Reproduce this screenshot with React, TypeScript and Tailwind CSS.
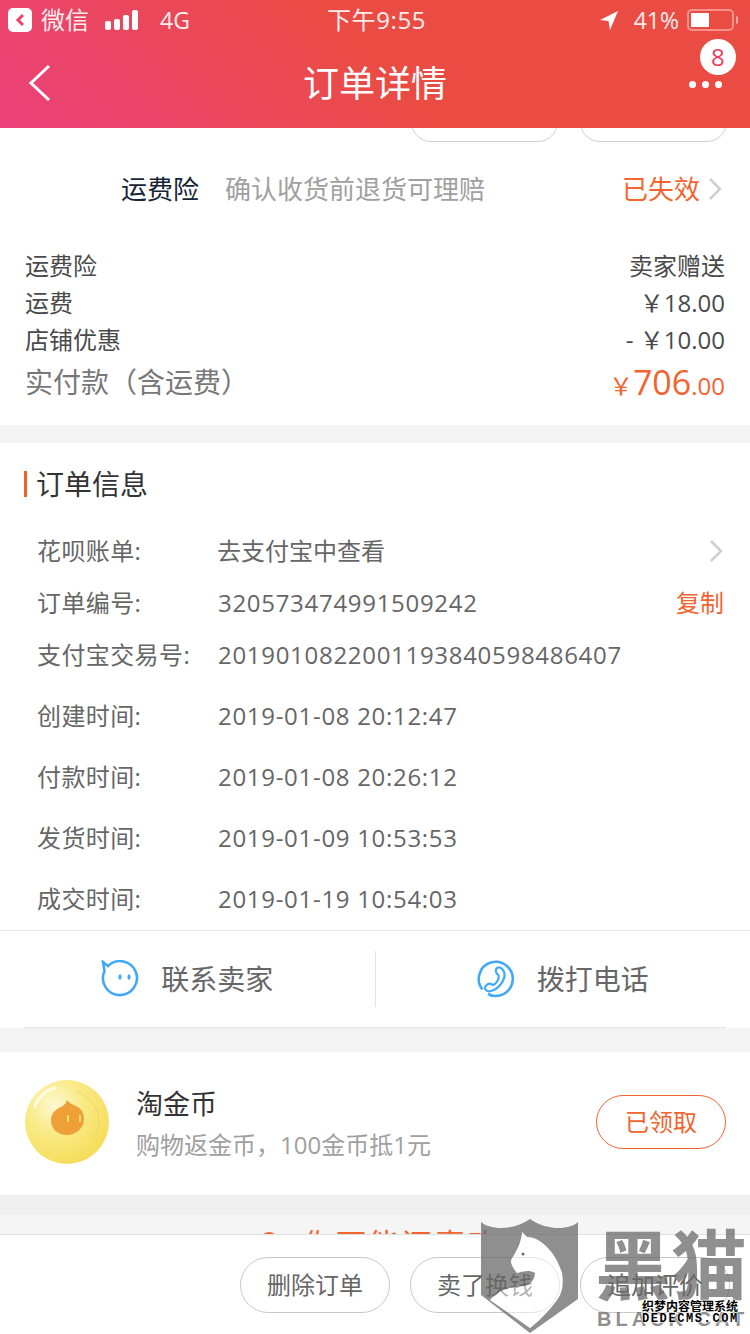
const sans = "font-['Open_Sans','Noto_Sans_CJK_SC',sans-serif]";

function StatusBar() {
  return (
    <div className="h-10 flex items-center justify-between pl-2 pr-3 text-[24px] leading-none text-white/90">
      <div className="flex items-center w-[290px]">
        <div className="w-6 h-6 rounded-[5px] bg-white flex items-center justify-center">
          <svg width="12" height="14" viewBox="0 0 12 14" fill="none"><path d="M9 2 4 7l5 5" stroke="#e94565" strokeWidth="3" /></svg>
        </div>
        <span className="ml-[9px]">微信</span>
        <div className="ml-4 flex items-end gap-[3px] h-5">
          <span className="w-[6px] h-[9px] bg-white rounded-[2px]" />
          <span className="w-[6px] h-[11px] bg-white rounded-[2px]" />
          <span className="w-[6px] h-[15px] bg-white rounded-[2px]" />
          <span className="w-[6px] h-[20px] bg-white rounded-[2px]" />
        </div>
        <span className="ml-[22px] text-[23px]">4G</span>
      </div>
      <span className="w-[102px] whitespace-nowrap tracking-[0.6px]">下午9:55</span>
      <div className="flex items-center justify-end w-[280px]">
        <svg width="19" height="20" viewBox="0 0 19 20"><path d="M19 1 11 20 9.5 11 1 10z" fill="white" /></svg>
        <span className="ml-4 text-[23px]">41%</span>
        <div className="ml-2 w-[47px] h-[22px] rounded-[5px] border-2 border-white/40 p-[2px]">
          <div className="w-[18px] h-full bg-white" />
        </div>
        <span className="ml-[2px] w-[2px] h-2 bg-white/50 rounded-r-sm" />
      </div>
    </div>
  );
}

function NavBar() {
  return (
    <div className="h-[88px] flex items-center justify-between pl-7 pr-[26px]">
      <div className="w-[34px] -mt-[2px]">
        <svg width="24" height="38" viewBox="0 0 24 38" fill="none"><path d="M21 2 3 19l18 17" stroke="white" strokeWidth="3" /></svg>
      </div>
      <span className="text-[36px] leading-none text-white -mt-[1px]">订单详情</span>
      <div className="relative w-[36px] flex justify-center gap-[6px] mt-[1px]">
        <span className="w-[7px] h-[7px] rounded-full bg-white shrink-0" />
        <span className="w-[7px] h-[7px] rounded-full bg-white shrink-0" />
        <span className="w-[7px] h-[7px] rounded-full bg-white shrink-0" />
        <span className="absolute -top-[42px] left-[12px] w-9 h-9 rounded-full bg-white flex items-center justify-center text-[24px] leading-none text-[#ee3b5e]">8</span>
      </div>
    </div>
  );
}

function Chevron({ className }: { className?: string }) {
  return (
    <svg width="14" height="24" viewBox="0 0 14 24" fill="none" className={className}><path d="M2 2 12 12 2 22" stroke="#cfcfcf" strokeWidth="2.5" /></svg>
  );
}

function PriceRow({ label, value }: { label: string; value: string }) {
  return (
    <div className="h-[37px] flex items-center justify-between text-[24px] text-[#4a4a4a]">
      <span>{label}</span>
      <span>{value}</span>
    </div>
  );
}

function InfoRow({ label, value, h, right }: { label: string; value: string; h: string; right?: React.ReactNode }) {
  return (
    <div className={`${h} flex items-center text-[24px] text-[#666]`}>
      <span className="w-[181px] shrink-0 tracking-[0.4px]">{label}</span>
      <span className="tracking-[0.7px] flex-1">{value}</span>
      {right}
    </div>
  );
}

function CoinIcon() {
  return (
    <svg width="84" height="84" viewBox="0 0 84 84" className="shrink-0 -mt-[3px]">
      <defs>
        <radialGradient id="coin" cx="35%" cy="30%" r="75%">
          <stop offset="0%" stopColor="#fdf8d0" />
          <stop offset="45%" stopColor="#f9ea86" />
          <stop offset="100%" stopColor="#f5dc58" />
        </radialGradient>
      </defs>
      <circle cx="42" cy="42" r="42" fill="url(#coin)" />
      <path d="M52 12A31 31 0 0 1 66 62" fill="none" stroke="#efd660" strokeWidth="1" />
      <path d="M10 26C14 16 22 10 30 8" fill="none" stroke="#fffbe0" strokeWidth="3" strokeLinecap="round" />
      <path d="M42 20c2 3 5 4 9 6 6 3 8 8 8 13 0 9-8 16-17 16s-16-6-16-15c0-8 6-11 10-13 3-2 5-3 6-7z" fill="#ef9f38" />
      <rect x="42" y="35" width="2" height="7" rx="1" fill="#f9e36a" />
      <rect x="54" y="35" width="2" height="7" rx="1" fill="#f9e36a" />
    </svg>
  );
}

function Watermark() {
  return (
    <div className="absolute left-[481px] top-[1219px] w-[269px] h-[115px] pointer-events-none">
      <svg width="98" height="115" viewBox="0 0 98 115" className="absolute left-0 top-0">
        <path
          fillRule="evenodd"
          fill="#6b6969"
          fillOpacity="0.75"
          d="M0 3C8 10 30 13 49 0 68 13 90 10 97 3V80L49 114 0 76ZM41 13 46 18C60 18 75 34 81 54 83 68 80 76 76 81 68 92 58 102 49 109L9 81C18 70 30 68 42 67 50 66 54 60 54 54 50 51 42 52 36 54 33 50 30 46 30 42 31 38 34 36 34 34 37 30 41 20 41 13Z"
        />
        <path fill="white" fillOpacity="0.5" d="M41 13 46 18C60 18 75 34 81 54 83 68 80 76 76 81 68 92 58 102 49 109L9 81C18 70 30 68 42 67 50 66 54 60 54 54 50 51 42 52 36 54 33 50 30 46 30 42 31 38 34 36 34 34 37 30 41 20 41 13Z" />
        <circle cx="42" cy="35" r="1.5" fill="#6b6969" />
      </svg>
      <div className={`absolute left-[114px] top-[8px] text-[76px] leading-none font-bold whitespace-nowrap text-[#6b6969]/75 ${sans}`}>黑猫</div>
      <div className="absolute left-[116px] top-[90px] text-[20px] leading-none font-bold whitespace-nowrap tracking-[4px] text-[#6b6969]/75 font-['Liberation_Sans',sans-serif]">BLACK CAT</div>
      <div className="absolute left-[161px] top-[81px] w-[98px] text-[12px] leading-[13px] font-bold text-black whitespace-nowrap [text-shadow:0_0_2px_white,0_0_2px_white,0_0_2px_white]">
        <div className={sans}>织梦内容管理系统</div>
        <div className="font-['Liberation_Mono',monospace] tracking-[1.6px]">DEDECMS.COM</div>
      </div>
    </div>
  );
}

export default function App() {
  return (
    <div className={`relative w-[750px] h-[1334px] overflow-hidden bg-white ${sans}`}>
      <header className="h-[128px] bg-[linear-gradient(45deg,#ea417c_0%,#ea4c44_50%)]">
        <StatusBar />
        <NavBar />
      </header>

      {/* 被头部盖住的按钮底边 */}
      <div className="relative h-[14px] overflow-hidden">
        <div className="absolute left-[411px] bottom-0 w-[147px] h-[40px] rounded-[20px] border border-[#cfcfcf]" />
        <div className="absolute left-[580px] bottom-0 w-[147px] h-[40px] rounded-[20px] border border-[#cfcfcf]" />
      </div>

      <section className="h-[283px] flex flex-col px-[25px]">
        <div className="h-[94px] flex items-center text-[26px]">
          <span className="ml-[96px] text-[#152535]">运费险</span>
          <span className="ml-[26px] text-[#a0a0a0]">确认收货前退货可理赔</span>
          <span className="ml-auto text-[#f26430]">已失效</span>
          <Chevron className="ml-[8px] mr-[3px]" />
        </div>
        <div className="mt-[11px]">
          <PriceRow label="运费险" value="卖家赠送" />
          <PriceRow label="运费" value="￥18.00" />
          <PriceRow label="店铺优惠" value="- ￥10.00" />
          <div className="h-[48px] flex items-center justify-between">
            <span className="text-[28px] text-[#777]">实付款（含运费）</span>
            <span className="text-[#f26430] text-[24px] leading-none">
              ￥<span className="text-[34px]">706</span>.00
            </span>
          </div>
        </div>
      </section>

      <div className="h-[18px] bg-[#f3f3f3]" />

      <section className="h-[487px] flex flex-col">
        <div className="h-[82px] flex items-center pl-6">
          <span className="w-[3px] h-[26px] bg-[#f0602a]" />
          <span className="ml-[9px] text-[28px] leading-none text-[#333]">订单信息</span>
        </div>
        <div className="pl-[37px] pr-[26px]">
          <div className="h-[52px] flex items-center text-[24px] text-[#666]">
            <span className="w-[180px] shrink-0 tracking-[0.4px]">花呗账单:</span>
            <span className="flex-1">去支付宝中查看</span>
            <Chevron className="mr-px" />
          </div>
          <InfoRow label="订单编号:" value="320573474991509242" h="h-[52px]" right={<span className="text-[#f26430]">复制</span>} />
          <InfoRow label="支付宝交易号:" value="2019010822001193840598486407" h="h-[52px]" />
          <InfoRow label="创建时间:" value="2019-01-08 20:12:47" h="h-[70px]" />
          <InfoRow label="付款时间:" value="2019-01-08 20:26:12" h="h-[52px]" />
          <InfoRow label="发货时间:" value="2019-01-09 10:53:53" h="h-[70px]" />
          <InfoRow label="成交时间:" value="2019-01-19 10:54:03" h="h-[52px]" />
        </div>
      </section>

      <section className="h-[98px] border-t border-[#e4e4e4] flex flex-col">
        <div className="h-[96px] flex items-center text-[28px] text-[#666]">
          <div className="flex-1 h-[56px] flex items-center justify-center gap-[22px] border-r border-[#e4e4e4]">
            <svg width="38" height="38" viewBox="0 0 38 38" fill="none">
              <path d="M7 6A17 17 0 1 1 3.5 11L2 2z" stroke="#40a9f8" strokeWidth="2.6" />
              <ellipse cx="19" cy="17" rx="1.6" ry="2.7" fill="#40a9f8" />
              <ellipse cx="28" cy="17" rx="1.6" ry="2.7" fill="#40a9f8" />
            </svg>
            <span>联系卖家</span>
          </div>
          <div className="flex-1 h-[56px] flex items-center justify-center gap-[22px]">
            <svg width="38" height="38" viewBox="0 0 38 38" fill="none">
              <path d="M5.5 29.5A17 17 0 1 1 11 34" stroke="#40a9f8" strokeWidth="2.6" />
              <path d="M21 7.5C24 7 27 10 27.5 14 28 20 22 29 14 31 10.5 32 8 30 8 28 8 25 12 23 14 24 15.5 25 16.5 25.5 18 24 20.5 21.5 22 18 21.5 15.5 21 14 19 13.5 18.8 11.5 18.7 9.5 19.5 8 21 7.5z" stroke="#40a9f8" strokeWidth="2.2" />
            </svg>
            <span>拨打电话</span>
          </div>
        </div>
        <div className="mx-6 border-t border-[#e4e4e4]" />
      </section>

      <div className="h-[24px] bg-[#f3f3f3]" />

      <section className="h-[143px] flex items-center pl-[25px] pr-6">
        <CoinIcon />
        <div className="ml-[27px] flex-1 flex flex-col gap-[7px]">
          <span className="text-[27px] leading-[36px] text-[#333]">淘金币</span>
          <span className="text-[24px] leading-[32px] text-[#a0a0a0]">购物返金币，100金币抵1元</span>
        </div>
        <button className="w-[130px] h-[54px] rounded-full border border-[#f26430] text-[24px] text-[#f26430] -mt-[3px]">已领取</button>
      </section>

      <div className="h-[20px] bg-[#f0f0f0]" />

      <div className="relative h-[20px] bg-[#f5f5f5] overflow-hidden">
        <span className="absolute left-[261px] top-[17px] w-[16px] h-[8px] rounded-t-full border-t-2 border-[#f26430]" />
        <div className="absolute left-[303px] top-[14px] text-[30px] leading-none whitespace-nowrap text-[#f26430] tracking-[3px]">你可能还喜欢</div>
      </div>

      <footer className="absolute left-0 right-0 bottom-0 h-[100px] bg-white border-t border-[#dedede] flex justify-end items-start pt-[22px] pr-5 gap-5">
        {["删除订单", "卖了换钱", "追加评价"].map(t => (
          <button key={t} className="w-[150px] h-[56px] shrink-0 rounded-full border border-[#c8c8c8] text-[24px] text-[#666]">{t}</button>
        ))}
      </footer>

      <Watermark />
    </div>
  );
}
